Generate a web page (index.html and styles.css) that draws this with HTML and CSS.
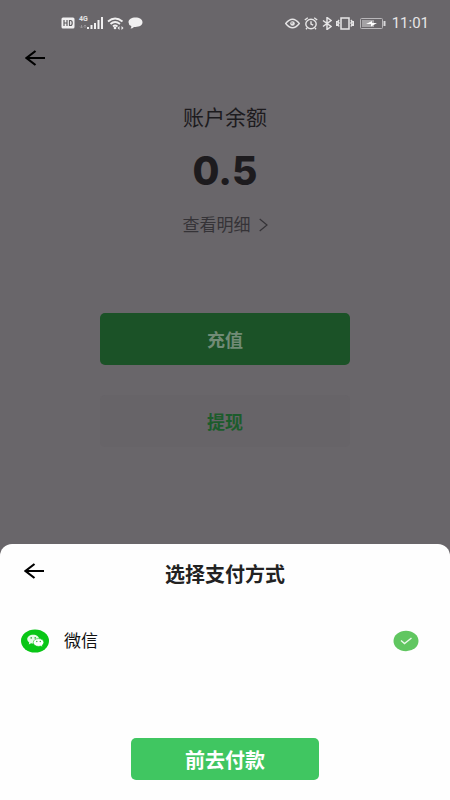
FILE: index.html
```html
<!DOCTYPE html>
<html lang="zh-CN">
<head>
<meta charset="utf-8">
<meta name="viewport" content="width=device-width, initial-scale=1">
<title>账户余额</title>
<link rel="stylesheet" href="styles.css">
</head>
<body>
<div class="screen">
  <header class="status">
    <div class="status-group">
      <svg width="14" height="12" viewBox="0 0 14 12" aria-hidden="true"><rect x="0.5" y="0.5" width="13" height="11" rx="1.500" fill="#f1f0f1"/><path d="M3 3v6M3 6h3M6 3v6M8.500 3.500v5h1q1.700 0 1.700-2.500t-1.700-2.500z" fill="none" stroke="#5f5d60" stroke-width="1.200"/></svg>
      <div class="signal">
        <span class="network">4G</span>
        <svg width="24" height="12" viewBox="0 0 24 12" aria-hidden="true"><path d="M9 10v2M12.500 8v4M16 6v6M19.500 3v9M23 0v12" stroke="#f1f0f1" stroke-width="2"/><path d="M2.500 8v3M1 9.500l1.500 1.500L4 9.500M6 11V8M4.800 9.200L6 8l1.300 1.200" fill="none" stroke="#969397"/></svg>
      </div>
      <svg width="17" height="13" viewBox="0 0 17 13" aria-hidden="true"><path d="M1 4.500Q8 -1.500 15.500 4.500M3.500 7Q8 3 13 7M6 9.500Q8 7.500 10.500 9.500" fill="none" stroke="#f1f0f1" stroke-width="1.800"/><circle cx="8" cy="11" r="1.300" fill="#f1f0f1"/><path d="M10.500 11l2-2v4zM16.500 11l-2-2v4z" fill="#f1f0f1"/></svg>
      <svg width="15" height="12" viewBox="0 0 15 12" aria-hidden="true"><path d="M7.500 0.500C11.500 0.500 14.500 2.500 14.500 5.300S11.500 10 7.500 10L6 9.900Q4.500 11.500 2.500 11.500Q3.600 10.300 3.300 9.100Q0.500 7.900 0.500 5.300C0.500 2.500 3.500 0.500 7.500 0.500z" fill="#f1f0f1"/></svg>
    </div>
    <div class="status-group">
      <svg width="15" height="11" viewBox="0 0 15 11" aria-hidden="true"><path d="M0.700 5.500Q7.500 -3 14.300 5.500Q7.500 14 0.700 5.500z" fill="none" stroke="#e6e5e6" stroke-width="1.400"/><circle cx="7.500" cy="5.500" r="2.300" fill="#e6e5e6"/><circle cx="7" cy="5" r=".7" fill="#69666a"/></svg>
      <svg width="14" height="13" viewBox="0 0 14 13" aria-hidden="true"><g fill="none" stroke="#e6e5e6" stroke-width="1.400"><ellipse cx="7" cy="7" rx="5.200" ry="4.700"/><path d="M0.800 3l3-2.300M13.200 3l-3-2.300M7 4.200V7l2.200 1.200M3 11l-1 1.300M11 11l1 1.300"/></g></svg>
      <svg width="10" height="13" viewBox="0 0 10 13" aria-hidden="true"><path d="M1 3.500l8 6-4 3v-12l4 3-8 6" fill="none" stroke="#e6e5e6" stroke-width="1.500"/></svg>
      <svg width="18" height="13" viewBox="0 0 18 13" aria-hidden="true"><path d="M5 1h8v11H5zM3 3L2 4.500 3 6 2 7.500 3 9.500M.7 4v5M15 3l1 1.500L15 6l1 1.500-1 2M17.300 4v5" fill="none" stroke="#e6e5e6" stroke-width="1.500"/></svg>
      <svg class="battery" width="26" height="11" viewBox="0 0 26 11" aria-hidden="true"><rect x="0.500" y="0.500" width="22" height="10" rx="1" fill="none" stroke="#b9b7ba"/><path d="M2 2h12v7H2z" fill="#a4a2a5"/><path d="M24.500 3v5" stroke="#d9d8da" stroke-width="2"/><path d="M6 6l6-3v2h5l-6 3.500V6z" fill="#fff"/></svg>
      <span class="time">11:01</span>
    </div>
  </header>
  <main class="account">
    <button class="back" aria-label="返回"><svg width="20" height="16" viewBox="0 0 20 16" aria-hidden="true"><path d="M10.500 1L1.500 8l9 7M1.500 8H20" fill="none" stroke="currentColor" stroke-width="2.200"/></svg></button>
    <h1 class="label">账户余额</h1>
    <p class="balance">0.5</p>
    <a class="details" href="#details">查看明细<svg width="9" height="14" viewBox="0 0 9 14" aria-hidden="true"><path d="M0.700 1L8 7l-7.300 6" fill="none" stroke="currentColor" stroke-width="1.200"/></svg></a>
    <div class="actions">
      <button class="action recharge">充值</button>
      <button class="action withdraw">提现</button>
    </div>
  </main>
  <section class="sheet" role="dialog" aria-labelledby="sheet-title">
    <header class="sheet-head">
      <button class="back" aria-label="关闭"><svg width="20" height="16" viewBox="0 0 20 16" aria-hidden="true"><path d="M10.500 1L1.500 8l9 7M1.500 8H20" fill="none" stroke="currentColor" stroke-width="2.200"/></svg></button>
      <h2 class="sheet-title" id="sheet-title">选择支付方式</h2>
    </header>
    <label class="method">
      <svg width="28" height="24" viewBox="0 0 28 24" aria-hidden="true"><ellipse cx="14" cy="12" rx="14" ry="11.500" fill="#09c616"/><path d="M12.200 5.700C8.900 5.700 6.200 7.500 6.200 10.200Q6.200 12.200 8.200 13.600L7.800 15.400l2.300-1.100q1 .3 2.300.3C15.500 14.600 18.200 12.700 18.200 10.200S15.500 5.700 12.200 5.700z" fill="#e6fae7"/><path d="M17.500 9.600c-3 0-5.200 1.600-5.200 3.900s2.200 3.900 5.200 3.900q1 0 2-.3l1.900.9-.4-1.600q1.800-1.200 1.800-2.900c0-2.300-2.300-3.900-5.300-3.900z" fill="#fff" stroke="#09c616" stroke-width=".6"/><g fill="#35a93c"><circle cx="10.200" cy="8.900" r=".8"/><circle cx="14.200" cy="8.900" r=".8"/><circle cx="15.800" cy="12.500" r=".7"/><circle cx="19.300" cy="12.500" r=".7"/></g></svg>
      <span class="method-name">微信</span>
      <input class="choice" type="radio" name="method" checked>
      <svg class="tick" width="26" height="22" viewBox="0 0 26 22" aria-hidden="true"><ellipse cx="13" cy="11" rx="12.500" ry="10.200" fill="#60c660"/><path d="M8 10.500l3.500 3L18.500 8" fill="none" stroke="#e9f8e9" stroke-width="1.400"/></svg>
    </label>
    <button class="pay">前去付款</button>
  </section>
</div>
</body>
</html>
```
FILE: styles.css
```css
* {
  box-sizing: border-box;
}

body {
  margin: 0;
  background: #69666a;
  color: #1d1b1e;
  font-family: Roboto, "Noto Sans CJK SC", sans-serif;
}

button {
  margin: 0;
  padding: 0;
  border: 0;
  font: inherit;
  cursor: pointer;
}

svg {
  display: block;
  flex: none;
}

.screen {
  display: flex;
  flex-direction: column;
  min-height: 100vh;
}

.status {
  display: flex;
  justify-content: space-between;
  align-items: center;
  height: 46px;
  padding: 0 21px 0 61px;
  color: #e6e5e6;
}

.status-group {
  display: flex;
  align-items: center;
  gap: 4px;
}

.battery {
  margin: 0 2px;
}

.signal {
  position: relative;
}

.network {
  position: absolute;
  top: -1px;
  left: 0;
  font-size: 7px;
  font-weight: 700;
  line-height: 7px;
}

.time {
  font-size: 15px;
  line-height: 18px;
}

.account {
  display: flex;
  flex-direction: column;
  align-items: center;
}

.back {
  display: block;
  padding: 4px;
  background: none;
  color: #000;
}

.account .back {
  align-self: flex-start;
  margin-left: 21px;
}

.label {
  margin: 33px 0 0;
  font-size: 21px;
  font-weight: 400;
  line-height: 30px;
}

.balance {
  margin: 14px 0 0;
  font-family: Inter, sans-serif;
  font-size: 39px;
  font-weight: 800;
  line-height: 48px;
}

.details {
  display: flex;
  align-items: center;
  gap: 8px;
  margin-top: 18px;
  color: #353337;
  font-size: 17px;
  line-height: 24px;
  text-decoration: none;
}

.actions {
  display: grid;
  gap: 30px;
  width: 100%;
  margin-top: 76px;
  padding: 0 100px;
}

.action {
  height: 52px;
  border-radius: 5px;
  font-size: 18px;
  font-weight: 700;
}

.recharge {
  background: #1b5227;
  color: #718b76;
}

.withdraw {
  background: #676468;
  color: #1c5c2c;
}

.sheet {
  position: fixed;
  right: 0;
  bottom: 0;
  left: 0;
  display: flex;
  flex-direction: column;
  padding: 15px 20px 20px;
  border-radius: 12px 12px 0 0;
  background: #fefefe;
}

.sheet-head {
  display: grid;
  grid-template-columns: 28px 1fr 28px;
  align-items: start;
}

.sheet-title {
  margin: 0;
  padding-top: 2px;
  color: #222;
  font-size: 20px;
  font-weight: 700;
  line-height: 28px;
  text-align: center;
}

.method {
  display: flex;
  align-items: center;
  margin-top: 39px;
  padding: 0 11px 0 1px;
  color: #111;
  font-size: 17px;
  line-height: 26px;
  cursor: pointer;
}

.method-name {
  flex: 1;
  margin-left: 15px;
}

.choice {
  position: absolute;
  opacity: 0;
}

.choice:focus-visible + .tick {
  outline: 2px solid #1b5227;
}

.pay {
  align-self: center;
  width: 42%;
  min-width: 188px;
  height: 42px;
  margin-top: 84px;
  border-radius: 5px;
  background: #40c661;
  color: #fff;
  font-size: 20px;
  font-weight: 700;
}
```
